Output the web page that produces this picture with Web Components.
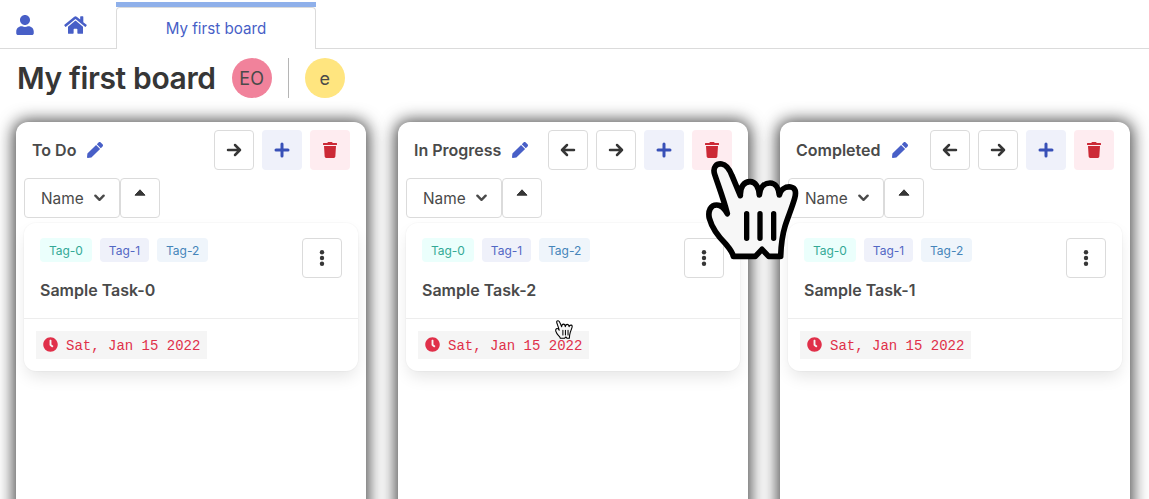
<!DOCTYPE html>
<html>
<head>
<meta charset="utf-8">
<title>My first board</title>
<style>
html, body { margin: 0; height: 499px; overflow: hidden; background: #fff; }
body { font-family: Inter, "Liberation Sans", sans-serif; color: #4a4a4a; }
</style>
</head>
<body>
<board-page></board-page>

<script>
const ICONS = {
  user: ['0 0 448 512', '<path fill="currentColor" d="M224 256c70.7 0 128-57.3 128-128S294.7 0 224 0 96 57.3 96 128s57.3 128 128 128zm89.6 32h-16.7c-22.2 10.2-46.9 16-72.9 16s-50.6-5.8-72.9-16h-16.7C60.2 288 0 348.2 0 422.4V464c0 26.5 21.5 48 48 48h352c26.5 0 48-21.5 48-48v-41.6c0-74.2-60.2-134.4-134.4-134.4z"/>'],
  home: ['0 0 576 512', '<path fill="currentColor" d="M280.37 148.26L96 300.11V464a16 16 0 0 0 16 16l112.06-.29a16 16 0 0 0 15.92-16V368a16 16 0 0 1 16-16h64a16 16 0 0 1 16 16v95.64a16 16 0 0 0 16 16.05L464 480a16 16 0 0 0 16-16V300L295.67 148.26a12.19 12.19 0 0 0-15.3 0zM571.6 251.47L488 182.56V44.05a12 12 0 0 0-12-12h-56a12 12 0 0 0-12 12v72.61L318.47 43a48 48 0 0 0-61 0L4.34 251.47a12 12 0 0 0-1.6 16.9l25.5 31A12 12 0 0 0 45.15 301l235.22-193.74a12.19 12.19 0 0 1 15.3 0L530.9 301a12 12 0 0 0 16.9-1.6l25.5-31a12 12 0 0 0-1.7-16.93z"/>'],
  pen: ['0 0 512 512', '<path fill="currentColor" d="M290.74 93.24l128.02 128.02-277.99 277.99-114.14 12.6C11.35 513.54-1.56 500.62.14 485.34l12.7-114.22 277.9-277.88zm207.2-19.06l-60.11-60.11c-18.75-18.75-49.16-18.75-67.91 0l-56.55 56.55 128.02 128.02 56.55-56.55c18.75-18.76 18.75-49.16 0-67.91z"/>'],
  right: ['0 0 16 16', '<path fill="none" stroke="currentColor" stroke-width="2.500" stroke-linecap="round" stroke-linejoin="round" d="M2 8h12M9 3l5 5-5 5"/>'],
  left: ['0 0 16 16', '<path fill="none" stroke="currentColor" stroke-width="2.500" stroke-linecap="round" stroke-linejoin="round" d="M14 8H2M7 3L2 8l5 5"/>'],
  plus: ['0 0 16 16', '<path fill="none" stroke="currentColor" stroke-width="3" stroke-linecap="round" d="M8 2v12M2 8h12"/>'],
  trash: ['0 0 448 512', '<path fill="currentColor" d="M432 32H312l-9.4-18.7A24 24 0 0 0 281.1 0H166.8a23.72 23.72 0 0 0-21.4 13.3L136 32H16A16 16 0 0 0 0 48v32a16 16 0 0 0 16 16h416a16 16 0 0 0 16-16V48a16 16 0 0 0-16-16zM53.2 467a48 48 0 0 0 47.9 45h245.8a48 48 0 0 0 47.9-45L416 128H32z"/>'],
  chevron: ['0 0 12 8', '<path fill="none" stroke="currentColor" stroke-width="2.600" stroke-linecap="round" stroke-linejoin="round" d="M1.500 1.500L6 6l4.500-4.500"/>'],
  up: ['0 0 12 7', '<path fill="currentColor" stroke="currentColor" stroke-linejoin="round" d="M6 .8L11 6.200H1z"/>'],
  dots: ['0 0 6 16', '<circle cx="3" cy="2.300" r="2.200" fill="currentColor"/><circle cx="3" cy="8" r="2.200" fill="currentColor"/><circle cx="3" cy="13.700" r="2.200" fill="currentColor"/>'],
  clock: ['0 0 512 512', '<path fill="currentColor" d="M256,8C119,8,8,119,8,256S119,504,256,504,504,393,504,256,393,8,256,8Zm92.49,313h0l-20,25a16,16,0,0,1-22.49,2.500h0l-67-49.720a40,40,0,0,1-15-31.230V112a16,16,0,0,1,16-16h32a16,16,0,0,1,16,16V256l58,42.500A16,16,0,0,1,348.490,321Z"/>']
}

class AppIcon extends HTMLElement {
  constructor() {
    super()
    this.attachShadow({mode: 'open'})
    const [box, body] = ICONS[this.getAttribute('name')]
    const w = this.getAttribute('w'), h = this.getAttribute('h') || w
    this.shadowRoot.innerHTML = `
<style>:host { display: inline-flex; flex: none; } svg { display: block; }</style>
<svg xmlns="http://www.w3.org/2000/svg" width="${w}" height="${h}" viewBox="${box}">${body}</svg>`
  }
}

class IconButton extends HTMLElement {
  constructor() {
    super()
    this.attachShadow({mode: 'open'})
    this.shadowRoot.innerHTML = `
<style>
:host { display: inline-flex; flex: none; box-sizing: border-box; width: 40px; height: 40px; align-items: center; justify-content: center; border: 1px solid #dbdbdb; border-radius: 4px; background: #fff; color: #363636; }
:host([kind="link"]) { background: #eff1fa; border-color: transparent; color: #3850b7; }
:host([kind="danger"]) { background: #feecf0; border-color: transparent; color: #cc2936; }
</style>
<slot></slot>`
  }
}

class TagChip extends HTMLElement {
  constructor() {
    super()
    this.attachShadow({mode: 'open'})
    this.shadowRoot.innerHTML = `
<style>
:host { display: inline-flex; align-items: center; height: 24px; padding: 0 9px; border-radius: 4px; font-size: 12px; letter-spacing: -.04px; background: #eff1fa; color: #5267c4; }
:host([kind="primary"]) { background: #ebfffc; color: #33a996; }
:host([kind="info"]) { background: #eff5fb; color: #4585ba; }
</style>
<slot></slot>`
  }
}

class AvatarBadge extends HTMLElement {
  constructor() {
    super()
    this.attachShadow({mode: 'open'})
    this.shadowRoot.innerHTML = `
<style>
:host { display: inline-flex; flex: none; width: 40px; height: 40px; border-radius: 50%; align-items: center; justify-content: center; font-size: 18px; color: #4a4a4a; background: var(--avatar, #f1829b); }
</style>
<slot></slot>`
  }
}

class TopNav extends HTMLElement {
  constructor() {
    super()
    this.attachShadow({mode: 'open'})
    this.shadowRoot.innerHTML = `
<style>
:host { display: flex; box-sizing: border-box; height: 49px; border-bottom: 1px solid #dbdbdb; color: #485fc7; }
.ico { display: flex; align-items: flex-start; padding-top: 15px; }
.user { margin-left: 16px; width: 48px; }
.home { width: 52px; }
.tab { display: flex; flex-direction: column; width: 200px; margin: 2px 0 -1px 0; }
.strip { height: 5px; background: #8fb0ea; }
.label { flex: 1; display: flex; align-items: center; justify-content: center; font-size: 15.200px; background: #fff; border: 1px solid #dbdbdb; border-bottom: 0; border-radius: 4px 4px 0 0; }
</style>
<div class="ico user"><app-icon name="user" w="18" h="20"></app-icon></div>
<div class="ico home"><app-icon name="home" w="23" h="20"></app-icon></div>
<div class="tab"><div class="strip"></div><div class="label">My first board</div></div>`
  }
}

class BoardTitle extends HTMLElement {
  constructor() {
    super()
    this.attachShadow({mode: 'open'})
    this.shadowRoot.innerHTML = `
<style>
:host { display: flex; align-items: center; height: 40px; padding: 9px 0 0 17px; }
h1 { margin: 0 16px 0 0; font-size: 30px; font-weight: 600; letter-spacing: -.37px; color: #363636; line-height: 40px; }
.sep { width: 1px; height: 40px; margin: 0 16px; background: #b5b5b5; }
</style>
<h1><slot></slot></h1>
<avatar-badge>EO</avatar-badge>
<div class="sep"></div>
<avatar-badge style="--avatar:#ffe57f">e</avatar-badge>`
  }
}

class TaskCard extends HTMLElement {
  constructor() {
    super()
    this.attachShadow({mode: 'open'})
    this.shadowRoot.innerHTML = `
<style>
:host { display: block; margin-top: 5px; border-radius: 12px; background: #fff; box-shadow: 0 8px 16px -2px rgba(10,10,10,.1), 0 0 0 1px rgba(10,10,10,.02); }
.body { display: flex; justify-content: space-between; padding: 15px 16px 16px; border-bottom: 1px solid #ededed; }
.tags { display: flex; gap: 8px; }
.name { margin-top: 16px; font-size: 16px; line-height: 24px; font-weight: 600; color: #4a4a4a; }
.foot { padding: 12px; }
.date { display: inline-flex; align-items: center; gap: 8px; height: 28px; padding: 0 7px; background: #f5f5f5; color: #e0304a; font: 14px "Liberation Mono", monospace; }
.date span { padding-top: 2px; }
.date app-icon { margin-top: -2px; }
</style>
<div class="body">
  <div>
    <div class="tags">
      <tag-chip kind="primary">Tag-0</tag-chip>
      <tag-chip>Tag-1</tag-chip>
      <tag-chip kind="info">Tag-2</tag-chip>
    </div>
    <div class="name"><slot></slot></div>
  </div>
  <icon-button><app-icon name="dots" w="6" h="16"></app-icon></icon-button>
</div>
<div class="foot"><div class="date"><app-icon name="clock" w="15"></app-icon><span>Sat, Jan 15 2022</span></div></div>`
  }
}

class BoardColumn extends HTMLElement {
  constructor() {
    super()
    this.attachShadow({mode: 'open'})
    const arrows = (this.getAttribute('arrows') || '').split(' ').filter(Boolean)
    const moves = arrows.map(a => `<icon-button><app-icon name="${a}" w="16"></app-icon></icon-button>`).join('')
    this.shadowRoot.innerHTML = `
<style>
:host { display: block; flex: none; box-sizing: border-box; width: 350px; height: 460px; padding: 8px; border-radius: 12px; background: #fff; box-shadow: 0 1px 16px 3px rgba(10,10,10,.72); }
.head { display: flex; align-items: center; gap: 8px; height: 40px; padding: 0 8px; }
.title { font-size: 16px; font-weight: 600; color: #4a4a4a; }
.pen { margin-left: 3px; margin-right: auto; color: #485fc7; }
.sort { display: flex; margin-top: 8px; }
.select { display: flex; align-items: center; box-sizing: border-box; width: 96px; height: 40px; padding: 0 14px 0 16px; justify-content: space-between; border: 1px solid #dbdbdb; border-radius: 4px; font-size: 15.400px; color: #4a4a4a; }
.dir { padding-bottom: 12px; }
</style>
<div class="head">
  <span class="title">${this.getAttribute('title')}</span>
  <app-icon class="pen" name="pen" w="16"></app-icon>
  ${moves}
  <icon-button kind="link"><app-icon name="plus" w="16"></app-icon></icon-button>
  <icon-button kind="danger"><app-icon name="trash" w="14" h="16"></app-icon></icon-button>
</div>
<div class="sort">
  <div class="select">Name<app-icon name="chevron" w="11" h="8"></app-icon></div>
  <icon-button class="dir"><app-icon name="up" w="12" h="7"></app-icon></icon-button>
</div>
<slot></slot>`
  }
}

// the pointer hand laid over the board, drawn in a 315x330 box
class HandCursor extends HTMLElement {
  constructor() {
    super()
    this.attachShadow({mode: 'open'})
    this.shadowRoot.innerHTML = `
<style>:host { position: absolute; display: block; } svg { display: block; }</style>
<svg xmlns="http://www.w3.org/2000/svg" width="100%" height="100%" viewBox="0 0 315 330">
  <path fill="#f7f7f7" stroke="#000" stroke-width="17" stroke-linejoin="round" d="M44 58C37 36 50 25 65 27C80 29 89 44 96 62L121 122C120 96 132 80 150 80C166 80 176 96 178 120C180 96 194 84 210 84C226 84 236 100 238 120C242 104 256 94 272 96C287 98 289 112 284 130C276 158 264 186 255 214C247 240 243 272 242 304H206L186 283L166 304H100C97 290 88 280 78 268C56 246 36 220 28 190C23 168 32 150 50 150C66 150 74 162 82 176C72 136 56 94 44 58Z"/>
  <path fill="none" stroke="#000" stroke-width="16" stroke-linecap="round" d="M140 176V250M180 176V250M221 176V250"/>
</svg>`
  }
}

class BoardPage extends HTMLElement {
  constructor() {
    super()
    this.attachShadow({mode: 'open'})
    this.shadowRoot.innerHTML = `
<style>
:host { display: block; position: relative; height: 499px; overflow: hidden; }
.columns { display: flex; gap: 32px; margin-top: 24px; padding-left: 16px; }
.big { left: 700px; top: 155px; width: 105px; height: 110px; }
.small { left: 554px; top: 319px; width: 20px; height: 21px; }
</style>
<top-nav></top-nav>
<board-title>My first board</board-title>
<div class="columns">
  <board-column title="To Do" arrows="right"><task-card>Sample Task-0</task-card></board-column>
  <board-column title="In Progress" arrows="left right"><task-card>Sample Task-2</task-card></board-column>
  <board-column title="Completed" arrows="left right"><task-card>Sample Task-1</task-card></board-column>
</div>
<hand-cursor class="big"></hand-cursor>
<hand-cursor class="small"></hand-cursor>`
  }
}

customElements.define('app-icon', AppIcon)
customElements.define('icon-button', IconButton)
customElements.define('tag-chip', TagChip)
customElements.define('avatar-badge', AvatarBadge)
customElements.define('top-nav', TopNav)
customElements.define('board-title', BoardTitle)
customElements.define('task-card', TaskCard)
customElements.define('board-column', BoardColumn)
customElements.define('hand-cursor', HandCursor)
customElements.define('board-page', BoardPage)
</script>
</body>
</html>
